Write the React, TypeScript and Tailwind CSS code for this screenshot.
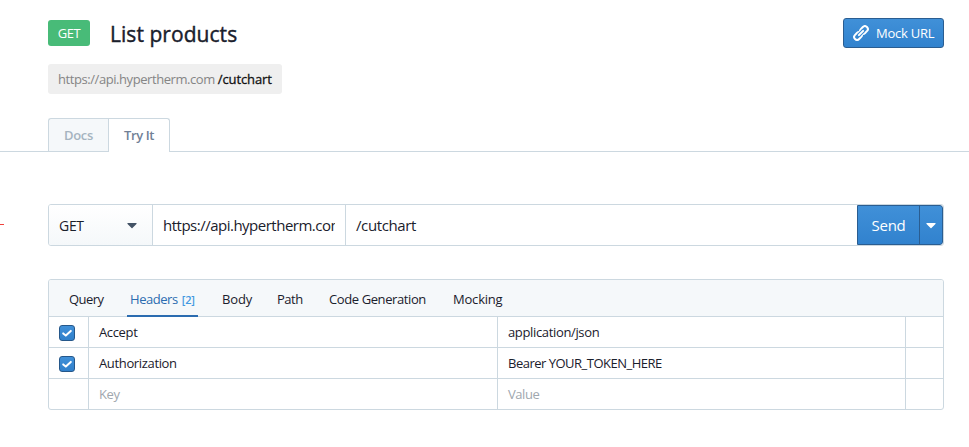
import React from "react";
import { FaCaretDown } from "react-icons/fa";

const tabs = [
  { label: "Query", cls: "w-[61px] tracking-[-0.55px]" },
  { label: "Headers", count: "[2]", cls: "w-[92px] tracking-[-0.45px]" },
  { label: "Body", cls: "w-[55px] tracking-[-0.1px]" },
  { label: "Path", cls: "w-[52px] tracking-[-0.5px]" },
  { label: "Code Generation", cls: "w-[124px] tracking-[-0.4px]" },
  { label: "Mocking", cls: "w-[60px] tracking-[-0.2px]" },
];

const rows = [
  { on: true, name: "Accept", value: "application/json", cls: "tracking-[-0.35px]" },
  { on: true, name: "Authorization", value: "Bearer YOUR_TOKEN_HERE", cls: "tracking-[-0.5px]" },
  { on: false, name: "Key", value: "Value", cls: "tracking-[-0.45px]" },
];

function Checkbox() {
  return (
    <span className="flex size-4 items-center justify-center rounded-[3px] border border-[#25578a] bg-gradient-to-b from-[#4090d8] to-[#3080cb]">
      <svg viewBox="0 0 14 14" className="size-3.5 shrink-0" fill="none" stroke="white" strokeWidth="2" strokeLinecap="round" strokeLinejoin="round">
        <path d="M3.2 7.4 5.8 9.6 10.8 4.9" />
      </svg>
    </span>
  );
}

function LinkIcon() {
  return (
    <svg viewBox="0 0 16 16" className="size-4" fill="none" stroke="white" strokeWidth="2">
      <g transform="rotate(-45 8 8)">
        <rect x="-0.4" y="5.1" width="8.4" height="5.8" rx="2.9" />
        <rect x="8" y="5.1" width="8.4" height="5.8" rx="2.9" />
        <path d="M5 8h6" stroke="#3b8ad3" strokeWidth="4" />
        <path d="M5 8h6" strokeLinecap="round" />
      </g>
    </svg>
  );
}

export default function App() {
  return (
    <div className="relative h-[447px] w-[969px] overflow-hidden bg-white font-['Open_Sans','Noto_Sans',sans-serif] text-[#1a202c]">
      <div className="absolute left-0 top-[224px] h-px w-1 bg-[#f0423c]" />
      <header className="flex h-[48px] items-start pl-12 pr-[25px] pt-[18px]">
        <span className="mt-0.5 flex h-[26px] w-[42px] items-center justify-center rounded-[3px] bg-[#48bb78] pt-px text-[13px] tracking-[-0.4px] text-white">GET</span>
        <h1 className="ml-5 mt-px flex-1 whitespace-nowrap text-[21px] leading-[30px] tracking-[0.05px] [-webkit-text-stroke:0.4px]">List products</h1>
        <button className="flex h-[30px] w-[101px] items-center rounded-[3px] border border-[#2a5d91] bg-gradient-to-b from-[#4090d8] to-[#3182ce] pl-[9px] text-[13px] tracking-[-0.25px] text-white">
          <LinkIcon />
          <span className="ml-[7px] mt-0.5 whitespace-nowrap">Mock URL</span>
        </button>
      </header>
      <div className="ml-12 mt-4 flex h-[30px] w-[234px] items-center whitespace-pre rounded-[3px] bg-[#efefef] pl-2.5 pt-0.5 text-[13px]">
        <span className="tracking-[-0.43px] text-[#858585]">https://api.hypertherm.com </span>
        <span className="tracking-[-0.1px] text-[#111] [-webkit-text-stroke:0.3px]">/cutchart</span>
      </div>
      <nav className="mt-6 flex h-[34px] text-[13px] font-semibold">
        <div className="w-12 border-b border-[#ccd8e0]" />
        <div className="flex w-[60px] items-center justify-center rounded-tl-[3px] border-b border-l border-t border-[#ccd8e0] bg-[#f5f8fa] pt-0.5 tracking-[-0.3px] text-[#a5b4c0]">Docs</div>
        <div className="flex w-[62px] items-center justify-center rounded-tr-[3px] border-l border-r border-t border-[#ccd8e0] tracking-[-0.4px] text-[#718096]">Try It</div>
        <div className="flex-1 border-b border-[#ccd8e0]" />
      </nav>
      <section className="ml-12 mt-[52px] flex h-[42px] w-[896px] overflow-hidden rounded-[3px] border border-[#ccd8e0] text-[15px]">
        <div className="flex w-[104px] items-center justify-between border-r border-[#ccd8e0] bg-gradient-to-b from-white to-[#f5f8fa] pl-2.5 pr-3.5">
          <span className="text-[14px] tracking-[-0.3px]">GET</span>
          <FaCaretDown className="h-4 w-3 text-[#435366]" />
        </div>
        <div className="flex w-[193px] items-center border-r border-[#ccd8e0] px-2.5">
          <span className="overflow-hidden whitespace-nowrap tracking-[-0.5px]">https://api.hypertherm.com</span>
        </div>
        <div className="flex flex-1 items-center pl-2.5 tracking-[-0.4px]">/cutchart</div>
        <div className="flex w-[86px] rounded-r-[3px] border border-[#2a5d91] bg-gradient-to-b from-[#4090d8] to-[#3182ce] text-white">
          <div className="flex w-[62px] items-center justify-center border-r border-[#2a5d91] tracking-[-0.3px]">Send</div>
          <div className="flex flex-1 items-center justify-center"><FaCaretDown className="h-4 w-3" /></div>
        </div>
      </section>
      <section className="ml-12 mt-[33px] w-[896px] overflow-hidden rounded-[3px] border border-[#ccd8e0] text-[13px]">
        <div className="flex h-[37px] border-b border-[#ccd8e0] bg-[#f5f8fa] pl-5">
          {tabs.map((t) => (
            <div key={t.label} className={"relative flex items-center whitespace-nowrap pt-1 " + t.cls + (t.count ? " text-[#2b6cb0]" : "")}>
              {t.label}
              {t.count && <span className="ml-1 text-[11px] font-semibold tracking-[-0.2px] text-[#4299e1]">{t.count}</span>}
              {t.count && <span className="absolute -bottom-px -left-[3px] h-0.5 w-[71px] bg-[#2b6cb0]" />}
            </div>
          ))}
        </div>
        {rows.map((r) => (
          <div key={r.name} className={"flex border-[#ccd8e0] " + (r.on ? "h-[31px] border-b" : "h-[30px] text-[#a0a7ae]")}>
            <div className="flex w-10 items-center border-r border-[#ccd8e0] pl-2.5 pt-0.5">{r.on && <Checkbox />}</div>
            <div className="flex w-[409px] items-center border-r border-[#ccd8e0] pl-2.5 pt-0.5 tracking-[-0.35px]">{r.name}</div>
            <div className={"flex w-[408px] items-center border-r border-[#ccd8e0] pl-2.5 pt-0.5 " + r.cls}>{r.value}</div>
          </div>
        ))}
      </section>
    </div>
  );
}
